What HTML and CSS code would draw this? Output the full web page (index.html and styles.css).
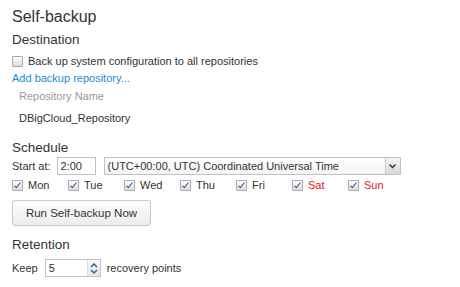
FILE: index.html
```html
<!DOCTYPE html>
<html lang="en">
  <head>
    <meta charset="utf-8">
    <title>Self-backup</title>
    <link rel="stylesheet" href="styles.css">
  </head>
  <body>
    <div class="page">
      <h1 class="title">Self-backup</h1>

      <h2 class="section">Destination</h2>
      <label class="check-row">
        <span class="box"></span>
        Back up system configuration to all repositories
      </label>
      <a class="link" href="#">Add backup repository...</a>
      <div class="repo-table">
        <div class="repo-head">Repository Name</div>
        <div class="repo-cell">DBigCloud_Repository</div>
      </div>

      <h2 class="section schedule">Schedule</h2>
      <div class="start-row">
        <span>Start at:</span>
        <span class="text-input time">2:00</span>
        <span class="select">
          <span class="select-text">(UTC+00:00, UTC) Coordinated Universal Time</span>
          <span class="select-btn">
            <svg width="9" height="6" viewBox="0 0 9 6"><path d="M1.5 1.5 L4.5 4.5 L7.5 1.5" fill="none" stroke="#333" stroke-width="1.5"/></svg>
          </span>
        </span>
      </div>
      <div class="days">
        <span class="day"><span class="box checked"></span>Mon</span>
        <span class="day"><span class="box checked"></span>Tue</span>
        <span class="day"><span class="box checked"></span>Wed</span>
        <span class="day"><span class="box checked"></span>Thu</span>
        <span class="day"><span class="box checked"></span>Fri</span>
        <span class="day weekend"><span class="box checked"></span>Sat</span>
        <span class="day weekend"><span class="box checked"></span>Sun</span>
      </div>
      <button class="button">Run Self-backup Now</button>

      <h2 class="section retention">Retention</h2>
      <div class="keep-row">
        <span>Keep</span>
        <span class="text-input spinner">
          <span>5</span>
          <span class="spin">
            <svg width="10" height="15" viewBox="0 0 10 15"><path d="M2 6 L5 3 L8 6" fill="none" stroke="#2a5fa8" stroke-width="1.5"/><path d="M2 9 L5 12 L8 9" fill="none" stroke="#2a5fa8" stroke-width="1.5"/></svg>
          </span>
        </span>
        <span>recovery points</span>
      </div>
    </div>
  </body>
</html>
```

FILE: styles.css
```css
body
{
    margin: 0;
    background: #fff;
    font-family: "Liberation Sans", Arial, sans-serif;
    font-size: 11px;
    color: #333;
}

.page
{
    padding: 7px 12px 0 12px;
    display: flex;
    flex-direction: column;
    align-items: flex-start;
}

.title
{
    margin: 0;
    font-size: 16px;
    font-weight: normal;
    line-height: 20px;
}

.section
{
    margin: 5px 0 0 0;
    font-size: 13.5px;
    font-weight: normal;
    line-height: 16px;
}

.check-row
{
    display: flex;
    align-items: center;
    margin-top: 6px;
    height: 14px;
}

.box
{
    width: 9px;
    height: 9px;
    border: 1px solid #a9a9a9;
    border-radius: 1px;
    background: linear-gradient(#fdfdfd, #dcdcdc);
    margin-right: 5px;
    position: relative;
}

.box.checked::after
{
    content: "";
    position: absolute;
    left: 3px;
    top: 0px;
    width: 2px;
    height: 6px;
    border-right: 1.5px solid #2a4f9a;
    border-bottom: 1.5px solid #2a4f9a;
    transform: rotate(40deg);
}

.link
{
    margin-top: 3px;
    color: #1a8ad4;
    text-decoration: none;
    line-height: 14px;
}

.repo-table
{
    padding-left: 7px;
}

.repo-head
{
    color: #999;
    margin-top: 4px;
    line-height: 14px;
}

.repo-cell
{
    margin-top: 8px;
    line-height: 14px;
}

.schedule
{
    margin-top: 15px;
}

.start-row
{
    display: flex;
    align-items: center;
    margin-top: 1px;
    height: 18px;
}

.text-input
{
    display: flex;
    align-items: center;
    box-sizing: border-box;
    height: 18px;
    border: 1px solid #c2c2c2;
    padding: 0 3px;
    background: #fff;
}

.time
{
    width: 39px;
    margin-left: 6px;
}

.select
{
    display: flex;
    align-items: center;
    box-sizing: border-box;
    width: 297px;
    height: 18px;
    margin-left: 8px;
    border: 1px solid #c2c2c2;
    background: linear-gradient(#fff, #f4f4f4);
}

.select-text
{
    flex: 1;
    padding-left: 3px;
}

.select-btn
{
    display: flex;
    align-items: center;
    justify-content: center;
    width: 14px;
    height: 16px;
    border-left: 1px solid #ccc;
    background: linear-gradient(#f4f4f4, #d8d8d8);
}

.days
{
    display: flex;
    margin-top: 3px;
    height: 14px;
}

.day
{
    display: flex;
    align-items: center;
    width: 56px;
}

.weekend
{
    color: #e8142c;
}

.button
{
    margin-top: 8px;
    width: 139px;
    height: 26px;
    border: 1px solid #c8c8c8;
    border-radius: 3px;
    background: linear-gradient(#fdfdfd, #ececec);
    font-family: inherit;
    font-size: 11.5px;
    color: #333;
}

.retention
{
    margin-top: 11px;
}

.keep-row
{
    display: flex;
    align-items: center;
    margin-top: 6px;
    height: 18px;
}

.spinner
{
    width: 56px;
    margin: 0 6px 0 7px;
    padding-right: 0;
    justify-content: space-between;
}

.spin
{
    display: flex;
    align-items: center;
    justify-content: center;
    width: 12px;
    height: 16px;
    border-left: 1px solid #ddd;
    background: linear-gradient(#fafafa, #e8e8e8);
}
```
